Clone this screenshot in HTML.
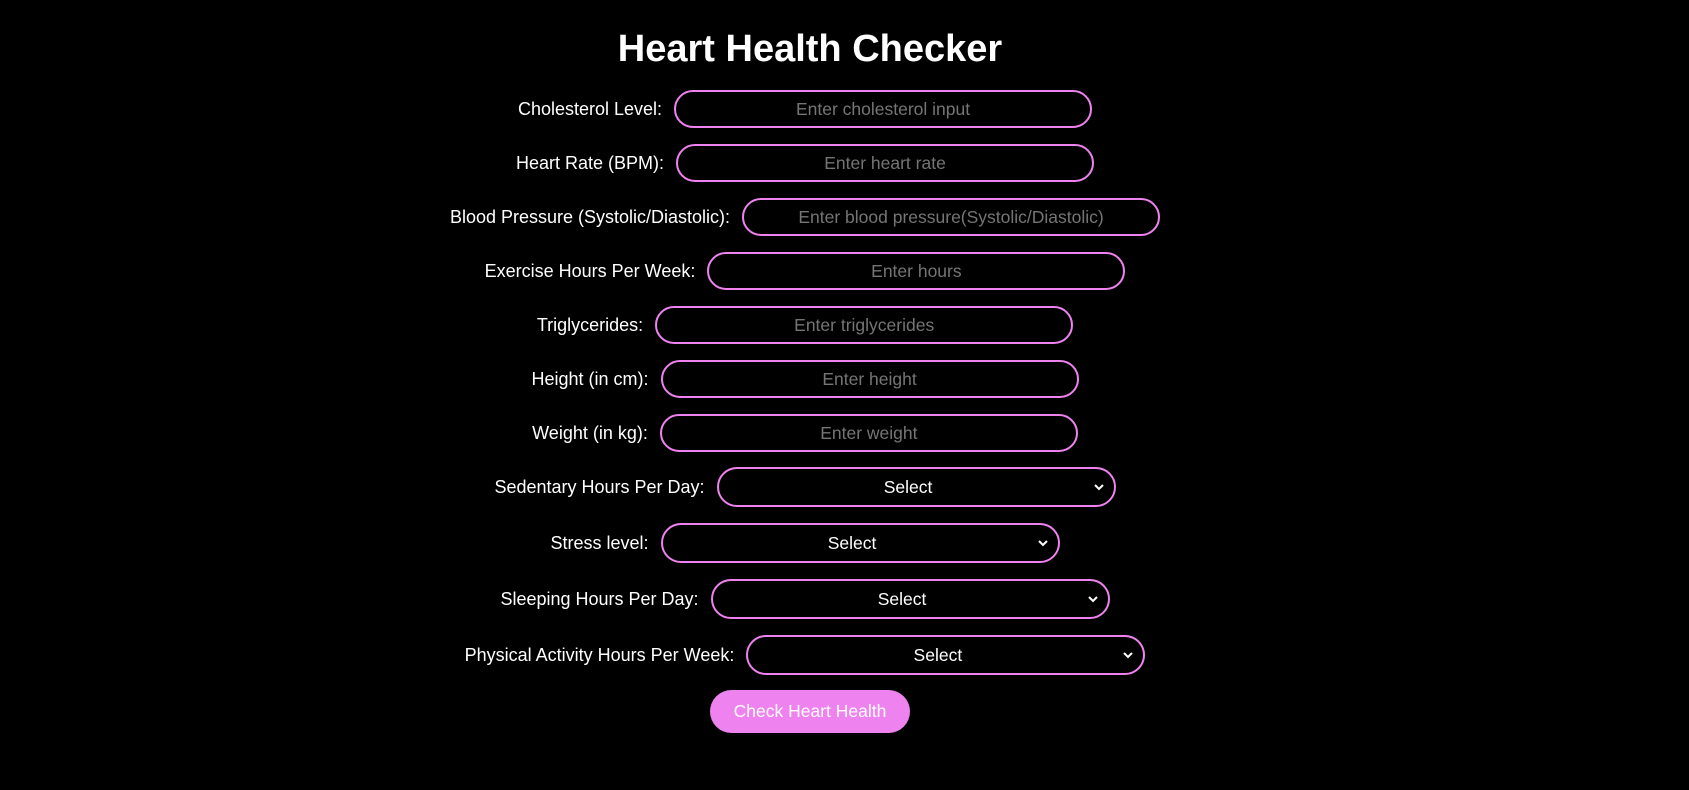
<!DOCTYPE html>
<html><head><meta charset="utf-8"><style>
html,body{margin:0;background:#000;width:1689px;height:790px;overflow:hidden;font-family:"Liberation Sans",sans-serif;color:#fff}
.wrap{width:1620px;position:relative}
h1{margin:0;position:absolute;top:27px;left:0;width:1620px;text-align:center;font-size:38px;font-weight:bold;line-height:44px}
.row{position:absolute;left:0;width:1610px;display:flex;justify-content:center;align-items:center;font-size:18px}
.row label{margin-right:12px}
.in{width:414px;height:34px;border:2px solid #ee82ee;border-radius:20px;display:flex;align-items:center;justify-content:center;color:#757575;font-size:17.5px}
.sel{height:36px;border:2px solid #ee82ee;border-radius:20px;display:flex;align-items:center;justify-content:center;color:#fff;position:relative;font-size:17.5px;padding-right:16px;box-sizing:content-box}
.sel svg{position:absolute;right:10px;top:14px}
.btn{position:absolute;left:710px;top:690px;width:200px;height:43px;border-radius:22px;background:#ee82ee;color:#fff;font-size:17.5px;display:flex;align-items:center;justify-content:center}
</style></head><body><div class="wrap">
<h1>Heart Health Checker</h1>
<div class="row" style="top:90px"><label>Cholesterol Level:</label><div class="in">Enter cholesterol input</div></div>
<div class="row" style="top:144px"><label>Heart Rate (BPM):</label><div class="in">Enter heart rate</div></div>
<div class="row" style="top:198px"><label>Blood Pressure (Systolic/Diastolic):</label><div class="in">Enter blood pressure(Systolic/Diastolic)</div></div>
<div class="row" style="top:252px"><label>Exercise Hours Per Week:</label><div class="in">Enter hours</div></div>
<div class="row" style="top:306px"><label>Triglycerides:</label><div class="in">Enter triglycerides</div></div>
<div class="row" style="top:360px"><label>Height (in cm):</label><div class="in">Enter height</div></div>
<div class="row" style="top:414px"><label>Weight (in kg):</label><div class="in">Enter weight</div></div>
<div class="row" style="top:467px"><label>Sedentary Hours Per Day:</label><div class="sel" style="width:379px">Select<svg width="10" height="8" viewBox="0 0 10 8"><path d="M1 2l4 4 4-4" stroke="#fff" stroke-width="2" fill="none"/></svg></div></div>
<div class="row" style="top:523px"><label>Stress level:</label><div class="sel" style="width:379px">Select<svg width="10" height="8" viewBox="0 0 10 8"><path d="M1 2l4 4 4-4" stroke="#fff" stroke-width="2" fill="none"/></svg></div></div>
<div class="row" style="top:579px"><label>Sleeping Hours Per Day:</label><div class="sel" style="width:379px">Select<svg width="10" height="8" viewBox="0 0 10 8"><path d="M1 2l4 4 4-4" stroke="#fff" stroke-width="2" fill="none"/></svg></div></div>
<div class="row" style="top:635px"><label>Physical Activity Hours Per Week:</label><div class="sel" style="width:379px">Select<svg width="10" height="8" viewBox="0 0 10 8"><path d="M1 2l4 4 4-4" stroke="#fff" stroke-width="2" fill="none"/></svg></div></div>
<div class="btn">Check Heart Health</div>
</div></body></html>
